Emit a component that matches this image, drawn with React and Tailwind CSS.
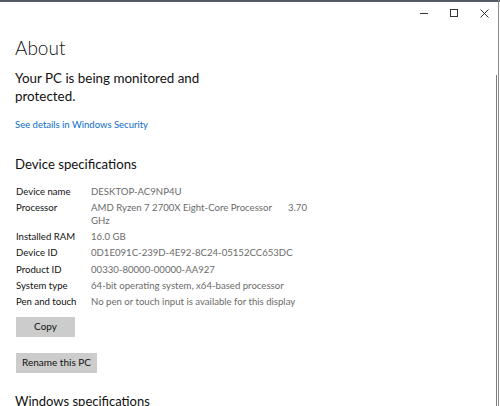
export default function App() {
  const font = { fontFamily: 'Lato, "Noto Sans", sans-serif' };
  const rows = [
    ["Device name", "DESKTOP-AC9NP4U"],
    ["Processor", null],
    ["Installed RAM", "16.0 GB"],
    ["Device ID", "0D1E091C-239D-4E92-8C24-05152CC653DC"],
    ["Product ID", "00330-80000-00000-AA927"],
    ["System type", "64-bit operating system, x64-based processor"],
    ["Pen and touch", "No pen or touch input is available for this display"],
  ];
  return (
    <div className="relative w-[500px] h-[406px] overflow-hidden bg-white text-black" style={font}>
      <div className="h-[2px] bg-[#545a68]" />
      {/* title bar */}
      <div className="flex justify-end h-[22px] pr-[1px]">
        <div className="w-[30px] flex items-center justify-center">
          <div className="w-[8px] h-[1px] bg-[#333]" />
        </div>
        <div className="w-[30px] flex items-center justify-center">
          <div className="w-[8px] h-[8px] border border-[#333]" />
        </div>
        <div className="w-[30px] flex items-center justify-center">
          <svg width="9" height="9" viewBox="0 0 9 9">
            <path d="M0.5 0.5L8.5 8.5M8.5 0.5L0.5 8.5" stroke="#333" strokeWidth="1" fill="none" />
          </svg>
        </div>
      </div>
      {/* content */}
      <div className="pl-[15px] pt-[12px]">
        <div className="text-[19px] leading-[24px] font-light text-[#111]">About</div>
        <div className="mt-[10px] w-[200px] text-[13.4px] leading-[17.5px] text-[#111]">
          Your PC is being monitored and protected.
        </div>
        <div className="mt-[13px] text-[9.5px] leading-[14px] text-[#0a6cc7]">See details in Windows Security</div>
        <div className="mt-[23px] text-[13.2px] leading-[18px] text-[#111]">Device specifications</div>
        <div className="mt-[13px] pl-[1px] flex flex-col gap-[4px] text-[9.6px] leading-[12.35px]">
          {rows.map(([k, v]) => (
            <div key={k} className="flex">
              <div className="w-[75px] shrink-0 text-[#111]">{k}</div>
              {v ? (
                <div className="whitespace-nowrap text-[#6b6b6b]">{v}</div>
              ) : (
                <div className="w-[216px] text-[#6b6b6b]">
                  <div className="flex justify-between whitespace-nowrap">
                    <span>AMD Ryzen 7 2700X Eight-Core Processor</span>
                    <span>3.70</span>
                  </div>
                  <div>GHz</div>
                </div>
              )}
            </div>
          ))}
        </div>
        <div className="mt-[8px] pl-[1px] flex flex-col items-start gap-[16px]">
          <div className="w-[59px] h-[20px] bg-[#cccccc] flex items-center justify-center text-[10px] text-[#111]">Copy</div>
          <div className="w-[81px] h-[20px] bg-[#cccccc] flex items-center justify-center text-[10px] text-[#111]">Rename this PC</div>
        </div>
        <div className="mt-[19px] text-[13px] leading-[18px] text-[#111]">Windows specifications</div>
      </div>
      {/* scrollbar thumb + window border (overlay) */}
      <div className="absolute right-[3px] top-[75px] bottom-0 w-[1px] bg-[#7a7a7a]" />
      <div className="absolute right-[1px] top-0 bottom-0 w-[1px] bg-[#8a8a8a]" />
    </div>
  );
}
